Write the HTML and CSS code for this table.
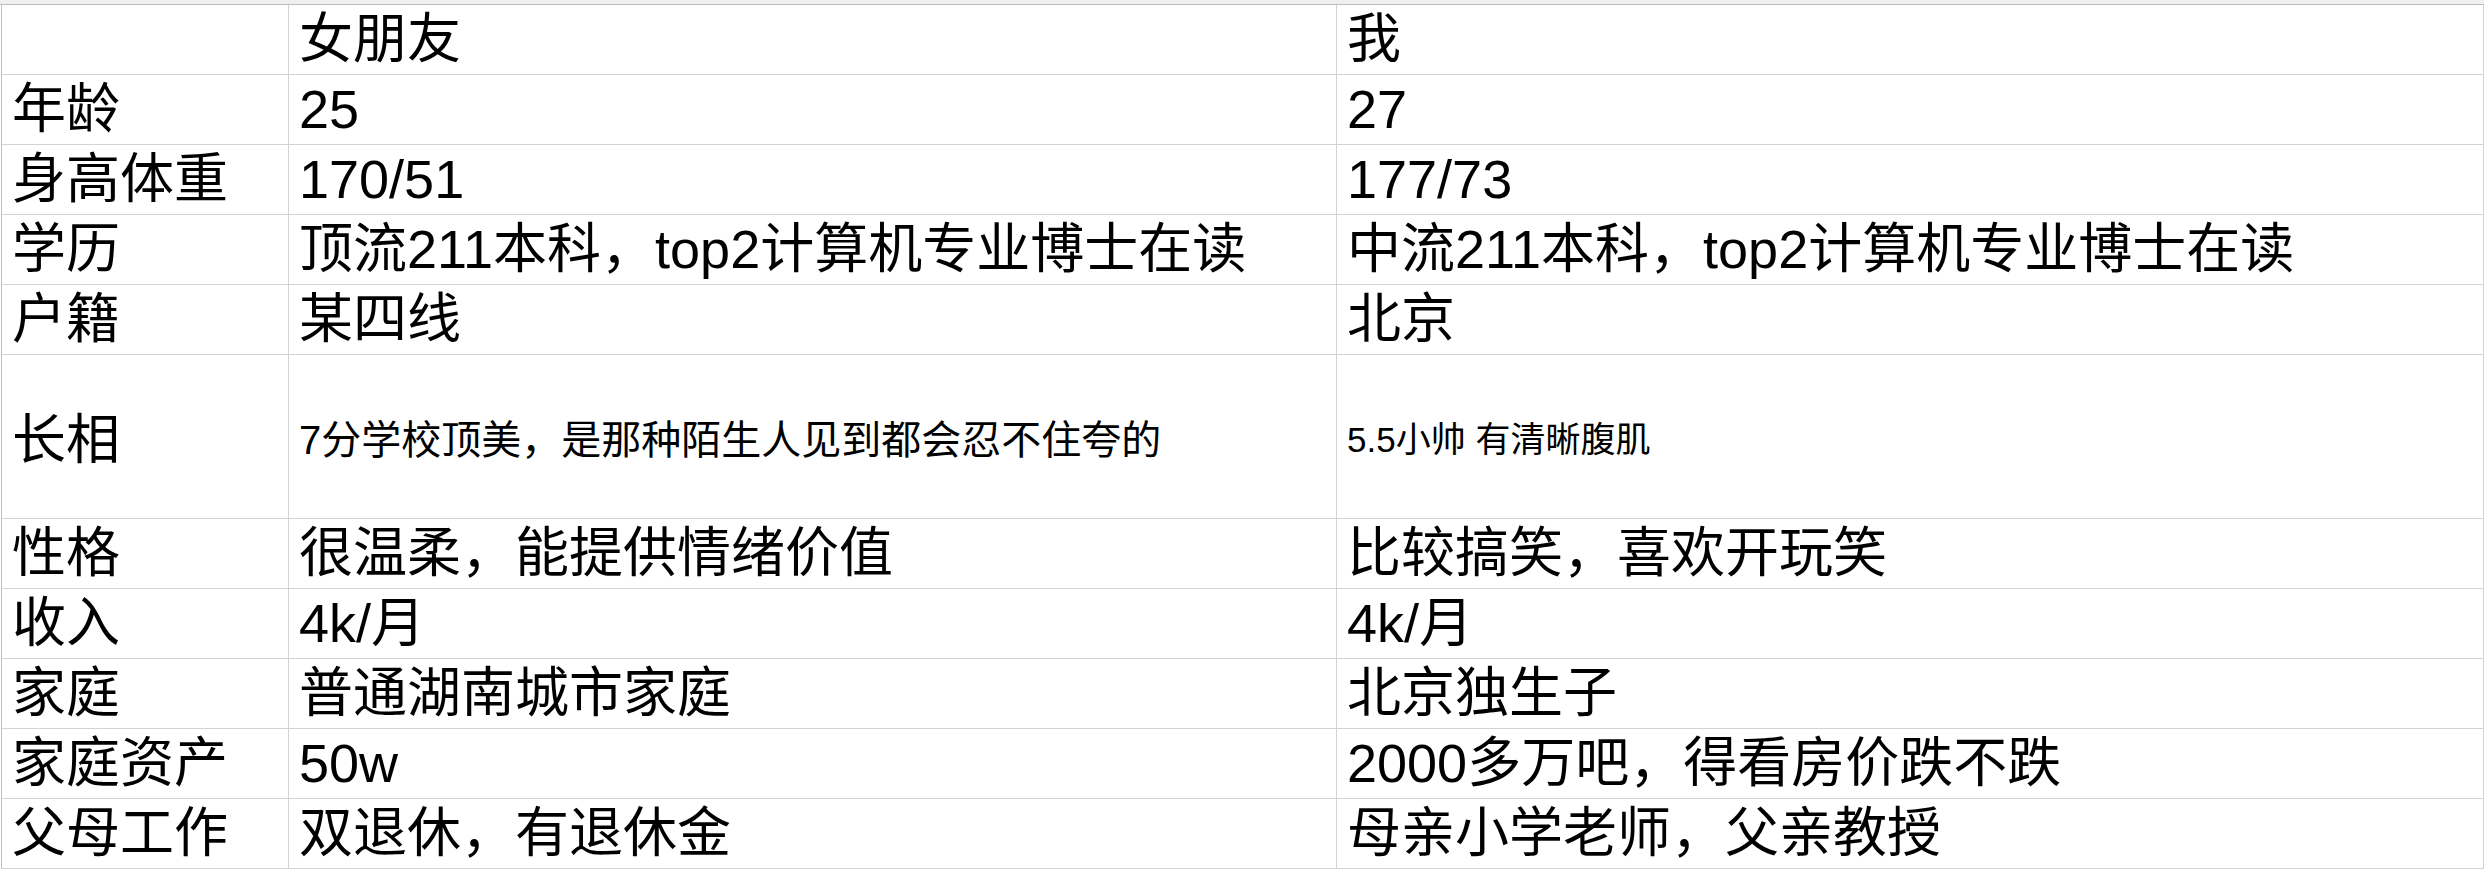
FILE: index.html
```html
<!DOCTYPE html>
<html lang="zh-CN">
<head>
<meta charset="utf-8">
<title>对比</title>
<link rel="stylesheet" href="styles.css">
</head>
<body>
<div class="topbar"></div>
<div class="sheet">
  <div class="cell"></div><div class="cell">女朋友</div><div class="cell">我</div>
  <div class="cell">年龄</div><div class="cell">25</div><div class="cell">27</div>
  <div class="cell">身高体重</div><div class="cell">170/51</div><div class="cell">177/73</div>
  <div class="cell">学历</div><div class="cell">顶流211本科，top2计算机专业博士在读</div><div class="cell">中流211本科，top2计算机专业博士在读</div>
  <div class="cell">户籍</div><div class="cell">某四线</div><div class="cell">北京</div>
  <div class="cell tall">长相</div><div class="cell tall small">7分学校顶美，是那种陌生人见到都会忍不住夸的</div><div class="cell tall smaller">5.5小帅 有清晰腹肌</div>
  <div class="cell">性格</div><div class="cell">很温柔，能提供情绪价值</div><div class="cell">比较搞笑，喜欢开玩笑</div>
  <div class="cell">收入</div><div class="cell">4k/月</div><div class="cell">4k/月</div>
  <div class="cell">家庭</div><div class="cell">普通湖南城市家庭</div><div class="cell">北京独生子</div>
  <div class="cell">家庭资产</div><div class="cell">50w</div><div class="cell">2000多万吧，得看房价跌不跌</div>
  <div class="cell">父母工作</div><div class="cell">双退休，有退休金</div><div class="cell">母亲小学老师，父亲教授</div>
</div>
</body>
</html>
```

FILE: styles.css
```css
html, body {
  margin: 0;
  padding: 0;
  background: #ffffff;
}

body {
  width: 2484px;
  height: 874px;
  overflow: hidden;
  font-family: "Liberation Sans", "Noto Sans CJK SC", sans-serif;
  color: #000000;
}

.topbar {
  height: 4px;
  background: #efefef;
  border-bottom: 1px solid #bdbdbd;
}

.sheet {
  margin-left: 1px;
  border-left: 1px solid #c0c0c0;
  display: grid;
  grid-template-columns: 287px 1048px 1fr;
  grid-template-rows: 70px 70px 70px 70px 70px 164px 70px 70px 70px 70px 70px;
}

.cell {
  box-sizing: border-box;
  border-right: 1px solid #d3d3d3;
  border-bottom: 1px solid #d3d3d3;
  display: flex;
  align-items: flex-end;
  padding: 0 10px 8px 10px;
  font-size: 54px;
  line-height: 1;
  white-space: nowrap;
  overflow: hidden;
}

.cell.tall {
  align-items: center;
  padding-bottom: 0;
  padding-top: 6px;
}

.cell.small {
  font-size: 40px;
}

.cell.smaller {
  font-size: 35px;
}
```
